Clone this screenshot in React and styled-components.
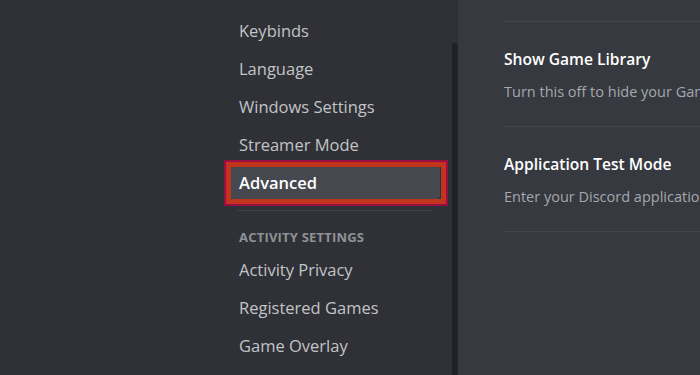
import React from "react";
import styled, { createGlobalStyle } from "styled-components";

const Global = createGlobalStyle`
  html, body { margin: 0; padding: 0; background: #36393f; }
  body { font-family: "Open Sans", "Noto Sans", sans-serif; }
  * { box-sizing: border-box; }
`;

const Page = styled.div`
  display: flex;
  width: 700px;
  height: 375px;
  overflow: hidden;
`;

const Sidebar = styled.aside`
  width: 458px;
  flex: none;
  background: #2f3136;
  display: flex;
  justify-content: flex-end;
`;

const Nav = styled.nav`
  width: 210px;
  margin-right: 12px;
  padding-top: 13px;
  display: flex;
  flex-direction: column;
`;

const Item = styled.div`
  position: relative;
  height: 34px;
  margin-bottom: 4px;
  padding-left: 9px;
  display: flex;
  align-items: center;
  font-size: 16.5px;
  font-weight: ${p => (p.$active ? 600 : 500)};
  color: ${p => (p.$active ? "#ffffff" : "#c2c4c7")};
  background: ${p => (p.$active ? "#45484f" : "transparent")};
  border-radius: 4px;
  white-space: nowrap;
`;

const Highlight = styled.span`
  position: absolute;
  left: -6px;
  top: -5px;
  width: 224px;
  height: 46px;
  border: 2.5px solid #960f45;
  box-shadow: inset 0 0 0 5px #c3341e;
  pointer-events: none;
`;

const Separator = styled.div`
  height: 1px;
  margin: 7px 8px 18px 7px;
  background: #3d4046;
`;

const Header = styled.div`
  height: 16px;
  margin-bottom: 7px;
  padding-left: 9px;
  font-size: 13px;
  font-weight: 700;
  line-height: 16px;
  color: #8e9297;
  letter-spacing: 0.2px;
`;

const Track = styled.div`
  width: 6px;
  flex: none;
  padding-top: 43px;
  display: flex;
`;

const Thumb = styled.div`
  flex: 1;
  background: #202225;
  border-radius: 3px 3px 0 0;
`;

const Content = styled.main`
  flex: 1;
  padding: 21px 0 0 46px;
  display: flex;
  flex-direction: column;
  overflow: hidden;
`;

const Divider = styled.div`
  height: 1px;
  background: #42454a;
`;

const Section = styled.section`
  padding: 26px 0 24px;
  display: flex;
  flex-direction: column;
  gap: 12px;
  white-space: nowrap;
`;

const Title = styled.div`
  font-size: 15.6px;
  font-weight: 600;
  line-height: 22px;
  color: #ffffff;
`;

const Desc = styled.div`
  font-size: 14.5px;
  line-height: 20px;
  color: #a5a8ad;
`;

const top = ["Keybinds", "Language", "Windows Settings", "Streamer Mode"];
const activity = ["Activity Privacy", "Registered Games", "Game Overlay"];

export default function App() {
  return (
    <>
      <Global />
      <Page>
        <Sidebar>
          <Nav>
            {top.map(t => (
              <Item key={t}>{t}</Item>
            ))}
            <Item $active>
              Advanced
              <Highlight />
            </Item>
            <Separator />
            <Header>ACTIVITY SETTINGS</Header>
            {activity.map(t => (
              <Item key={t}>{t}</Item>
            ))}
          </Nav>
          <Track>
            <Thumb />
          </Track>
        </Sidebar>
        <Content>
          <Divider />
          <Section>
            <Title>Show Game Library</Title>
            <Desc>Turn this off to hide your Game Library tab from the home screen.</Desc>
          </Section>
          <Divider />
          <Section>
            <Title>Application Test Mode</Title>
            <Desc>Enter your Discord application ID to enable test mode for that application.</Desc>
          </Section>
          <Divider />
        </Content>
      </Page>
    </>
  );
}
